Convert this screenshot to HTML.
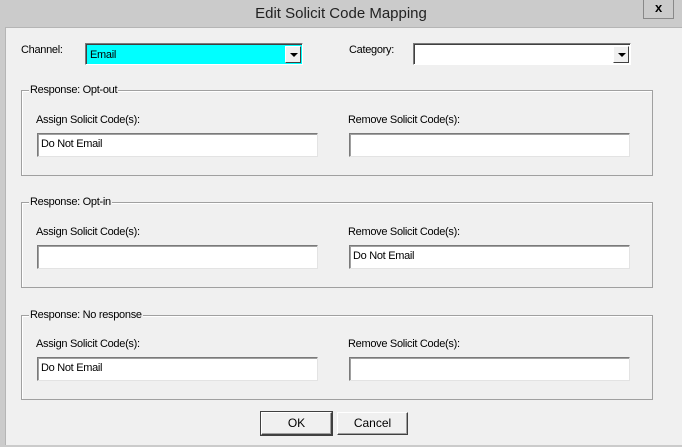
<!DOCTYPE html><html><head><style>
*{margin:0;padding:0;box-sizing:border-box}
body{width:682px;height:447px;background:#cbcbcb;font-family:"Liberation Sans",sans-serif;font-size:11px;letter-spacing:-0.3px;color:#000;position:relative;overflow:hidden}
.a{position:absolute}
#body{left:5px;top:27px;width:677px;height:418px;background:#f0f0f0;border-top:1px solid #b5b5b5;border-left:1px solid #b5b5b5}
.title{left:0;top:5px;width:682px;text-align:center;font-size:15px;letter-spacing:0;color:#222}
.close{left:643px;top:-1px;width:31px;height:20px;border:1px solid #888;border-top:none;text-align:center;font-weight:bold;font-size:13px;line-height:18px}
.tb{background:#fff;border-top:1px solid #7a7a7a;border-left:1px solid #7a7a7a;border-right:1px solid #e3e3e3;border-bottom:1px solid #e3e3e3;box-shadow:inset 1px 1px 0 #a0a0a0;padding:3px 0 0 3px;height:24px}
.combo{height:22px;border:1px solid #7a7a7a;border-right-color:#fff;border-bottom-color:#fff;box-shadow:inset 1px 1px 0 #404040;padding:5px 0 0 4px}
.dd{position:absolute;right:1px;top:2px;width:16px;height:17px;background:#f0f0f0;border:1px solid #fff;border-right-color:#404040;border-bottom-color:#404040}
.dd:after{content:"";position:absolute;left:4px;top:6px;border-left:4px solid transparent;border-right:4px solid transparent;border-top:4px solid #000}
.grp{border:1px solid #a0a0a0;box-shadow:1px 1px 0 #fff inset}
.lg{background:#f0f0f0;padding:0 1px}
.btn{width:71px;height:23px;border:1px solid #fff;border-right-color:#404040;border-bottom-color:#404040;box-shadow:inset -1px -1px 0 #a0a0a0;text-align:center;line-height:20px;font-size:12px;letter-spacing:0}
</style></head><body>
<div class="a title">Edit Solicit Code Mapping</div>
<div class="a close">x</div>
<div class="a" id="body"></div>
<div class="a" style="left:21px;top:44px">Channel:</div>
<div class="a combo" style="left:85px;top:43px;width:218px;background:#0ff">Email<div class="dd"></div></div>
<div class="a" style="left:349px;top:44px">Category:</div>
<div class="a combo" style="left:413px;top:43px;width:218px;background:#fff"><div class="dd"></div></div>

<div class="a grp" style="left:21px;top:90px;width:632px;height:86px"></div>
<div class="a lg" style="left:29px;top:84px">Response: Opt-out</div>
<div class="a" style="left:36px;top:114px">Assign Solicit Code(s):</div>
<div class="a tb" style="left:37px;top:133px;width:281px;padding-top:4px">Do Not Email</div>
<div class="a" style="left:348px;top:114px">Remove Solicit Code(s):</div>
<div class="a tb" style="left:349px;top:133px;width:281px"></div>

<div class="a grp" style="left:21px;top:202px;width:632px;height:86px"></div>
<div class="a lg" style="left:29px;top:196px">Response: Opt-in</div>
<div class="a" style="left:36px;top:226px">Assign Solicit Code(s):</div>
<div class="a tb" style="left:37px;top:245px;width:281px"></div>
<div class="a" style="left:348px;top:226px">Remove Solicit Code(s):</div>
<div class="a tb" style="left:349px;top:245px;width:281px;padding-top:4px">Do Not Email</div>

<div class="a grp" style="left:21px;top:315px;width:632px;height:85px"></div>
<div class="a lg" style="left:29px;top:309px">Response: No response</div>
<div class="a" style="left:36px;top:338px">Assign Solicit Code(s):</div>
<div class="a tb" style="left:37px;top:357px;width:281px;padding-top:4px">Do Not Email</div>
<div class="a" style="left:348px;top:338px">Remove Solicit Code(s):</div>
<div class="a tb" style="left:349px;top:357px;width:281px"></div>

<div class="a btn" style="left:261px;top:412px;outline:1px solid #404040">OK</div>
<div class="a btn" style="left:337px;top:412px">Cancel</div>
</body></html>
